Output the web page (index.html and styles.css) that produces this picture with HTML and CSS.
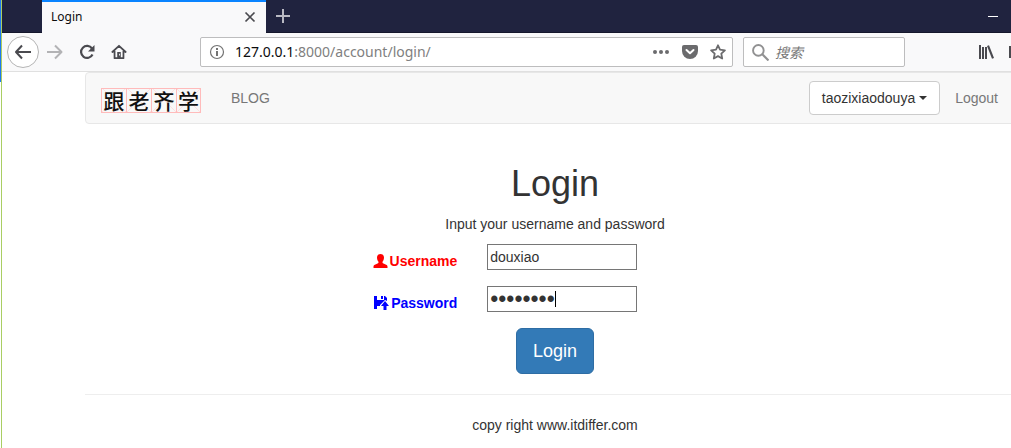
FILE: index.html
```html
<!DOCTYPE html>
<html lang="zh-CN">
  <head>
    <meta charset="UTF-8" />
    <meta name="viewport" content="width=device-width, initial-scale=1.0" />
    <title>Login</title>
    <link rel="stylesheet" href="styles.css">
  </head>
  <body>
    <div class="window">
      <div class="tab-bar">
        <div class="tab">
          <span class="tab-title">Login</span>
          <button type="button" class="icon-btn" aria-label="Close tab">
            <svg width="12" height="12" viewBox="0 0 12 12"><path d="M1.500 1.500l9 9M10.500 1.500l-9 9" fill="none" stroke="#4a4a4f" stroke-width="1.700"/></svg>
          </button>
        </div>
        <button type="button" class="icon-btn new-tab" aria-label="New tab">
          <svg width="16" height="16" viewBox="0 0 16 16"><path d="M8 1v14M1 8h14" fill="none" stroke="#b9b9c3" stroke-width="2"/></svg>
        </button>
        <button type="button" class="icon-btn minimize" aria-label="Minimize">
          <svg width="10" height="10" viewBox="0 0 10 10"><path d="M0 5h10v1H0z" fill="#fff"/></svg>
        </button>
      </div>

      <div class="toolbar">
        <button type="button" class="icon-btn back" aria-label="Back">
          <svg width="18" height="16" viewBox="0 0 18 16"><path d="M8 1.500L2 8l6 6.500M2 8h15" fill="none" stroke="#4a4a4f" stroke-width="2" stroke-linejoin="round"/></svg>
        </button>
        <button type="button" class="icon-btn nav-icon" aria-label="Forward">
          <svg width="16" height="16" viewBox="0 0 16 16"><path d="M8 1.500L14.500 8 8 14.500M14 8H0" fill="none" stroke="#b3b3b5" stroke-width="2" stroke-linejoin="round"/></svg>
        </button>
        <button type="button" class="icon-btn nav-icon" aria-label="Reload">
          <svg width="16" height="16" viewBox="0 0 16 16"><path d="M13 4.500A6 6 0 1 0 13.500 10.500" fill="none" stroke="#4a4a4f" stroke-width="2.200"/><path d="M15.500 1v6.500H9z" fill="#4a4a4f"/></svg>
        </button>
        <button type="button" class="icon-btn nav-icon" aria-label="Home">
          <svg width="18" height="18" viewBox="0 0 18 18"><path d="M1.500 9L9 2l7.500 7M4 8v8h10V8" fill="none" stroke="#4a4a4f" stroke-width="2" stroke-linejoin="round" stroke-linecap="round"/><path d="M7 9h4v7H7z" fill="#4a4a4f"/><path d="M9 11h1v2H9z" fill="#f9f9fa"/></svg>
        </button>

        <div class="url-bar">
          <svg width="16" height="16" viewBox="0 0 16 16"><circle cx="8" cy="8" r="6.500" fill="none" stroke="#737373" stroke-width="1.200"/><path d="M7 4h2v2H7zM7 7h2v5H7z" fill="#737373"/></svg>
          <div class="url"><span class="host">127.0.0.1</span>:8000/account/login/</div>
          <button type="button" class="icon-btn" aria-label="Page actions">
            <svg width="18" height="16" viewBox="0 0 18 16" fill="#6b6b6d"><circle cx="3" cy="8" r="2"/><circle cx="9" cy="8" r="2"/><circle cx="15" cy="8" r="2"/></svg>
          </button>
          <button type="button" class="icon-btn" aria-label="Save to Pocket">
            <svg width="16" height="16" viewBox="0 0 16 16"><path d="M2 1h12a2 2 0 0 1 2 2v4a8 8 0 0 1-16 0V3a2 2 0 0 1 2-2z" fill="#6b6b6d"/><path d="M4.500 6L8 9.300 11.500 6" fill="none" stroke="#fff" stroke-width="2" stroke-linecap="round" stroke-linejoin="round"/></svg>
          </button>
          <button type="button" class="icon-btn" aria-label="Bookmark">
            <svg width="16" height="16" viewBox="0 0 16 16"><path d="M8 1.300l2 4.400 4.900.6-3.600 3.300.9 4.900L8 12.100l-4.200 2.400.9-4.900L1.100 6.300 6 5.700z" fill="none" stroke="#6b6b6d" stroke-width="1.800" stroke-linejoin="round"/></svg>
          </button>
        </div>

        <label class="search-bar">
          <svg width="17" height="17" viewBox="0 0 16 16"><circle cx="6" cy="6" r="5" fill="none" stroke="#919192" stroke-width="1.800"/><path d="M9.500 9.500l6 6" stroke="#919192" stroke-width="2"/></svg>
          <input type="text" placeholder="搜索" aria-label="搜索">
        </label>

        <button type="button" class="icon-btn library" aria-label="Library">
          <svg width="16" height="16" viewBox="0 0 16 16"><path d="M1 1h2v14H1zM4 3h2v12H4zM7 3h2v12H7zM9 2l2-.700L16 14l-2 .700z" fill="#4a4a4f"/></svg>
        </button>
        <button type="button" class="icon-btn sidebar" aria-label="Sidebar">
          <svg width="16" height="16" viewBox="0 0 16 16"><path d="M1 3h14v10H1zM7 3v10" fill="none" stroke="#4a4a4f" stroke-width="2"/></svg>
        </button>
      </div>

      <div class="page">
        <nav class="navbar">
          <a href="#" class="brand"><span>跟</span><span>老</span><span>齐</span><span>学</span></a>
          <a href="#" class="nav-link">BLOG</a>
          <button type="button" class="user-menu">taozixiaodouya <span class="arrow"></span></button>
          <a href="#" class="nav-link">Logout</a>
        </nav>

        <main>
          <h1>Login</h1>
          <p>Input your username and password</p>
          <form>
            <div class="field">
              <label for="username" class="username">
                <svg width="15" height="14" viewBox="0 0 14 14"><path d="M7 0c2.300 0 3.500 1.500 3.500 3.600C10.500 5.500 9.800 7 9 7.800c-.2.900.1 1.400 1 1.800l2.600 1.100c.9.400 1.400 1 1.400 2V14H0v-1.300c0-1 .5-1.600 1.400-2L4 9.600c.9-.4 1.200-.9 1-1.800-.8-.8-1.500-2.300-1.500-4.200C3.500 1.500 4.700 0 7 0z" fill="currentColor"/></svg>Username
              </label>
              <div class="input-box"><input type="text" id="username" name="username" value="douxiao"></div>
            </div>
            <div class="field">
              <label for="password" class="password">
                <svg width="15" height="14" viewBox="0 0 15 14"><path d="M0 0h3v4h7V0h1l2 2v3l-2-1-5 5v1H3v3H0zM7 0h2v3H7z" fill="currentColor"/><path d="M11 5l4 5h-2.500v4h-3v-4H7z" fill="currentColor"/></svg>Password
              </label>
              <div class="input-box"><input type="password" id="password" name="password" value="12345678"><span class="caret"></span></div>
            </div>
            <button type="submit" class="submit">Login</button>
          </form>
        </main>

        <footer>copy right www.itdiffer.com</footer>
      </div>
    </div>
  </body>
</html>
```

FILE: styles.css
```css
* {
  box-sizing: border-box;
}

body {
  margin: 0;
  min-height: 100vh;
  font-family: "Liberation Sans", Arial, "Noto Sans CJK SC", sans-serif;
  font-size: 14px;
  line-height: 20px;
  color: #333;
  background: linear-gradient(#1e78f0 82px, #fff 82px);
  overflow: hidden;
}

/* browser window */
.window {
  margin-left: 1px;
  min-height: 100vh;
  border-left: 1px solid #a9ce63;
  background-color: #fff;
}

.icon-btn {
  display: flex;
  align-items: center;
  justify-content: center;
  flex: none;
  padding: 0;
  border: 0;
  background: none;
}

.tab-bar {
  display: flex;
  align-items: center;
  height: 33px;
  padding-left: 40px;
  background-color: #20233f;
  border-bottom: 1px solid #15172c;
}

.tab {
  display: flex;
  align-items: center;
  justify-content: space-between;
  width: 224px;
  height: 33px;
  padding: 0 10px 0 9px;
  border-top: 2px solid #0a84ff;
  background-color: #f9f9fa;
  color: #0c0c0d;
}

.tab-title {
  font-family: "Noto Sans", sans-serif;
  font-size: 12px;
}

.new-tab {
  margin-left: 9px;
}

.minimize {
  margin-left: auto;
  margin-right: 13px;
}

.toolbar {
  display: flex;
  align-items: center;
  height: 39px;
  padding-left: 5px;
  background-color: #f9f9fa;
  border-bottom: 1px solid #e0e0e0;
}

.back {
  width: 32px;
  height: 32px;
  margin-right: 8px;
  border: 1px solid #b5b5b5;
  border-radius: 50%;
  background-color: #fff;
}

.nav-icon {
  width: 16px;
  margin-right: 16px;
}

.url-bar,
.search-bar {
  display: flex;
  align-items: center;
  height: 30px;
  padding: 0 8px;
  border: 1px solid #bdbdbe;
  border-radius: 2px;
  background-color: #fff;
}

.url-bar {
  flex: 1;
  gap: 12px;
  margin-left: 57px;
  padding-right: 6px;
}

.url {
  flex: 1;
  margin-left: -2px;
  font-family: "Noto Sans", sans-serif;
  font-size: 14px;
  color: #808080;
}

.host {
  color: #0c0c0d;
}

.search-bar {
  width: 162px;
  gap: 6px;
  margin-left: 10px;
}

.search-bar svg {
  flex: none;
}

.search-bar input {
  width: 100%;
  min-width: 0;
  padding: 0;
  border: 0;
  outline: 0;
  font-family: "Noto Sans CJK SC", sans-serif;
  font-size: 14px;
}

.search-bar input::placeholder {
  font-style: italic;
  color: #777;
}

.library {
  margin-left: 73px;
}

.sidebar {
  width: 16px;
  margin-left: 15px;
  margin-right: -14px;
}

/* web page */
.page {
  margin-left: 83px;
  margin-right: -14px;
}

.navbar {
  display: flex;
  align-items: center;
  height: 52px;
  padding: 0 26px 0 15px;
  border: 1px solid #e7e7e7;
  border-radius: 4px;
  background-color: #f8f8f8;
}

.brand {
  display: flex;
  margin-top: 4px;
  margin-right: 30px;
  border: 1px solid #fbb;
  text-decoration: none;
  color: #111;
}

.brand span {
  width: 25px;
  height: 23px;
  border-right: 1px solid #fbb;
  background:
    linear-gradient(45deg, transparent 49%, #fde0e0 49%, #fde0e0 52%, transparent 52%),
    linear-gradient(-45deg, transparent 49%, #fde0e0 49%, #fde0e0 52%, transparent 52%);
  font-family: "AR PL UKai CN", KaiTi, "Noto Sans CJK SC", serif;
  font-size: 21px;
  font-weight: 500;
  line-height: 22px;
  text-align: center;
}

.brand span:last-child {
  width: 23px;
  border-right: 0;
}

.nav-link {
  text-decoration: none;
  color: #777;
}

.user-menu {
  display: flex;
  align-items: center;
  height: 34px;
  margin-left: auto;
  margin-right: 15px;
  padding: 0 12px;
  border: 1px solid #ccc;
  border-radius: 4px;
  background-color: #fff;
  font: inherit;
  color: #333;
}

.arrow {
  margin-left: 4px;
  border-top: 4px solid #333;
  border-left: 4px solid transparent;
  border-right: 4px solid transparent;
}

main {
  padding: 40px 0 20px;
  text-align: center;
  border-bottom: 1px solid #eee;
}

h1 {
  margin: 0 0 10px;
  font-size: 36px;
  font-weight: normal;
  line-height: 40px;
}

p {
  margin: 0 0 10px;
}

.field {
  display: grid;
  grid-template-columns: 9fr 13fr;
  column-gap: 30px;
  margin-bottom: 15px;
}

.field label {
  display: flex;
  align-items: center;
  justify-content: flex-end;
  gap: 2px;
  padding-top: 7px;
  font-weight: bold;
}

.username {
  color: red;
}

.password {
  color: blue;
}

.input-box {
  position: relative;
  width: 150px;
}

.input-box input {
  display: block;
  width: 100%;
  height: 26px;
  padding: 0 2px;
  border: 1px solid #767676;
  outline: 0;
  font: inherit;
  color: #333;
}

.input-box input[type="password"] {
  font-size: 23px;
}

.caret {
  position: absolute;
  top: 5px;
  left: 68px;
  height: 16px;
  border-left: 1px solid #000;
}

.submit {
  height: 46px;
  padding: 0 16px;
  border: 1px solid #2e6da4;
  border-radius: 6px;
  background-color: #337ab7;
  font: inherit;
  font-size: 18px;
  color: #fff;
}

footer {
  padding: 20px 0;
  text-align: center;
}
```
